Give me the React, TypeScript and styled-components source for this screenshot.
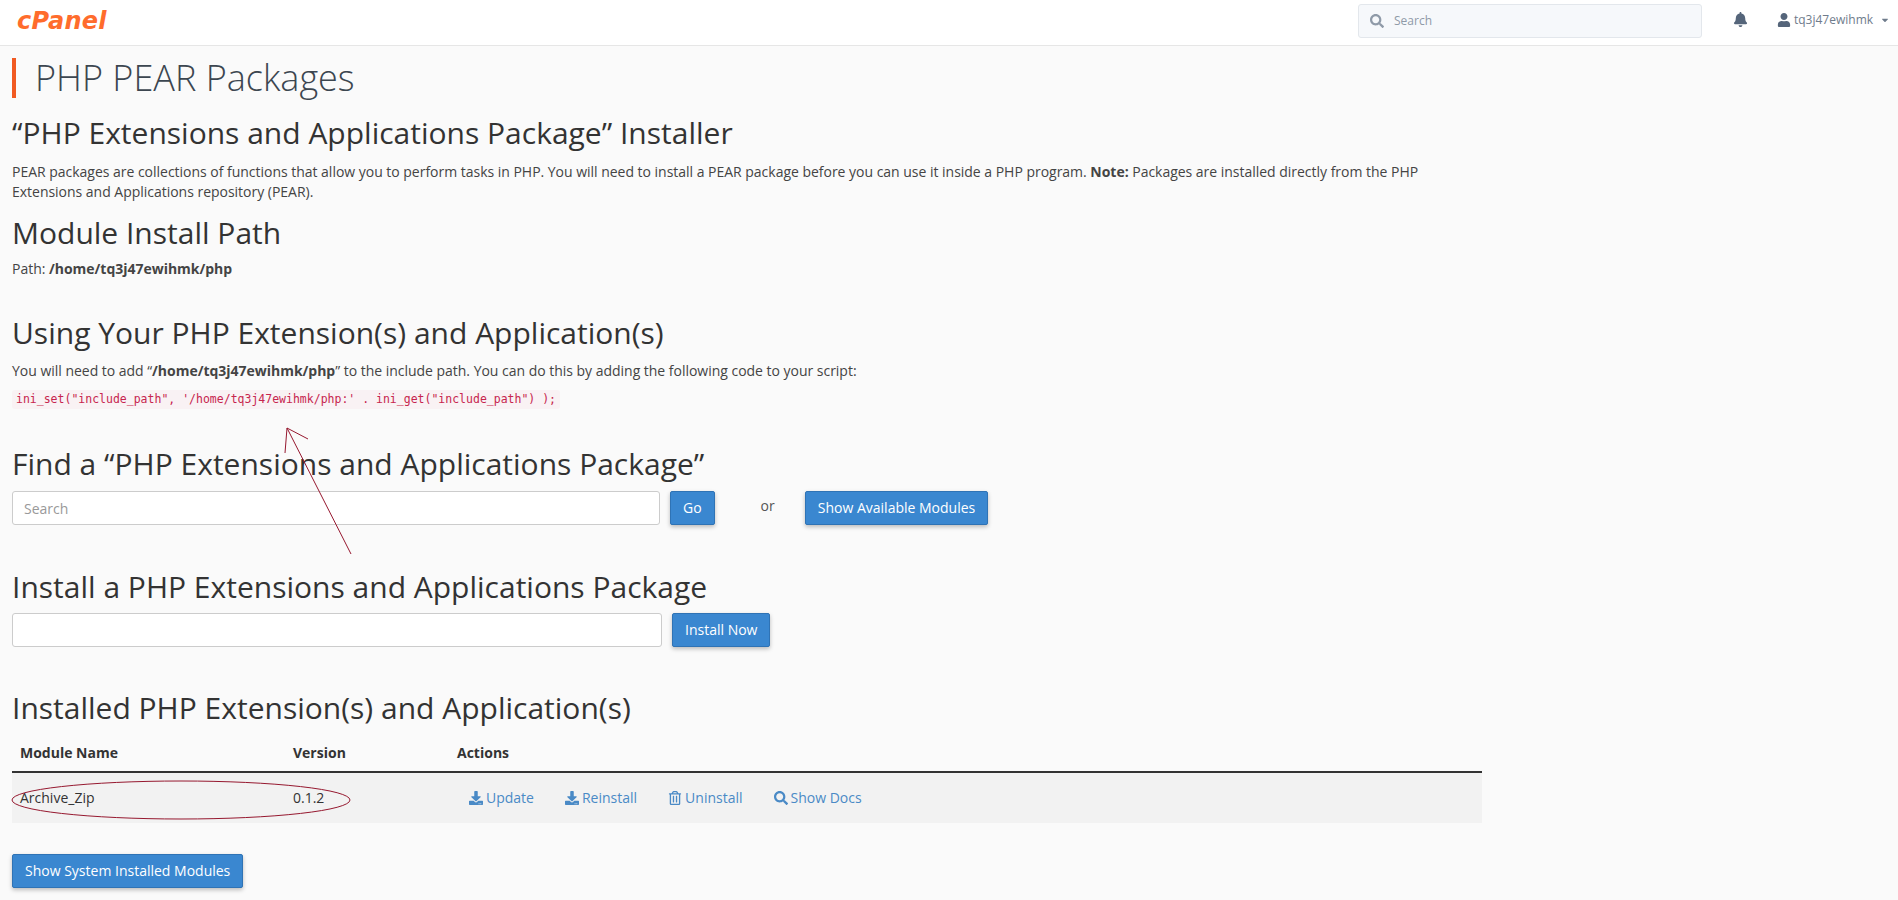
import React from "react";
import styled, { createGlobalStyle } from "styled-components";
import { FaSearch, FaBell, FaUser, FaCaretDown, FaDownload, FaRegTrashAlt } from "react-icons/fa";

const GlobalStyle = createGlobalStyle`
  html, body {
    margin: 0;
    padding: 0;
    background: #fafafa;
    color: #333;
    font-family: "Open Sans", "Liberation Sans", sans-serif;
    font-size: 14px;
    line-height: 20px;
  }
  * { box-sizing: border-box; }
`;

const blue = "#3a87d0";

const Page = styled.div`
  position: relative;
  width: 1898px;
  height: 900px;
  overflow: hidden;
`;

const TopBar = styled.header`
  display: flex;
  align-items: center;
  height: 46px;
  padding: 0 0 0 17px;
  background: #fff;
  border-bottom: 1px solid #e6e6e6;
`;

const Logo = styled.div`
  font-family: "DejaVu Sans", sans-serif;
  font-weight: 700;
  font-style: italic;
  font-size: 24px;
  letter-spacing: 0.3px;
  line-height: 24px;
  margin-top: -4px;
  color: #ff6c2c;
`;

const TopSearch = styled.div`
  display: flex;
  align-items: center;
  gap: 10px;
  width: 344px;
  height: 34px;
  margin-left: auto;
  margin-top: -4px;
  margin-right: 31px;
  padding-left: 11px;
  background: #f6f8fb;
  border: 1px solid #e3e7ec;
  border-radius: 3px;
  color: #8f9aa8;
  font-size: 12px;
`;

const TopActions = styled.div`
  display: flex;
  align-items: center;
  width: 165px;
  margin-top: -6px;
  color: #6f7c8c;
  font-size: 12px;
`;

const Bell = styled.span`
  display: flex;
  font-size: 15px;
  margin-right: 29px;
  color: #55657a;
`;

const UserName = styled.span`
  display: flex;
  align-items: center;
  gap: 3px;
  white-space: nowrap;
`;

const UserIcon = styled.span`
  display: flex;
  color: #55657a;
`;

const Caret = styled.span`
  display: flex;
  margin-left: 4px;
`;

const Content = styled.main`
  width: 1482px;
  padding-left: 12px;
`;

const PageTitle = styled.h1`
  margin: 12px 0 0;
  height: 40px;
  padding-left: 19px;
  border-left: 4px solid #f15a22;
  font-size: 36px;
  font-weight: 300;
  line-height: 40px;
  color: #3c4650;
`;

const SectionTitle = styled.h2<{ $top: number }>`
  margin: ${(p) => p.$top}px 0 0;
  font-size: 30px;
  font-weight: 400;
  line-height: 33px;
  color: #333;
`;

const Para = styled.p<{ $top?: number }>`
  margin: ${(p) => p.$top ?? 8}px 0 0;
  color: #444;
  letter-spacing: -0.02px;
`;

const Code = styled.code`
  display: inline-block;
  margin-top: 9px;
  padding: 2px 4px;
  background: #f9f2f4;
  border-radius: 3px;
  color: #c7254e;
  font-family: "DejaVu Sans Mono", "Liberation Mono", monospace;
  font-size: 11.5px;
  line-height: 15px;
`;

const FormRow = styled.div<{ $top: number }>`
  display: flex;
  align-items: center;
  gap: 10px;
  margin-top: ${(p) => p.$top}px;
`;

const TextInput = styled.input<{ $width: number }>`
  width: ${(p) => p.$width}px;
  height: 34px;
  padding: 0 11px;
  background: #fff;
  border: 1px solid #ccc;
  border-radius: 3px;
  font: inherit;
  &::placeholder { color: #999; }
`;

const Button = styled.button`
  height: 34px;
  padding: 0 12px;
  background: ${blue};
  border: 1px solid #2f73b5;
  border-radius: 2px;
  box-shadow: 0 2px 4px rgba(0, 0, 0, 0.25);
  color: #fff;
  font: inherit;
`;

const Or = styled.span`
  margin: -4px 20px 0 36px;
  color: #555;
`;

const Table = styled.div`
  width: 1470px;
  margin-top: 11px;
`;

const TableRow = styled.div<{ $head?: boolean }>`
  display: grid;
  grid-template-columns: 273px 164px 1fr;
  align-items: center;
  height: ${(p) => (p.$head ? 38 : 50)}px;
  padding-left: 8px;
  font-weight: ${(p) => (p.$head ? 700 : 400)};
  background: ${(p) => (p.$head ? "transparent" : "#f2f2f2")};
  border-bottom: ${(p) => (p.$head ? "2px solid #333" : "none")};
`;

const Actions = styled.div`
  display: flex;
  gap: 31px;
  padding-left: 12px;
`;

const ActionLink = styled.a`
  display: flex;
  align-items: center;
  gap: 3px;
  color: #4a8ac6;
`;

const FooterButton = styled(Button)`
  margin-top: 31px;
`;

const Annotations = styled.svg`
  position: absolute;
  inset: 0;
  pointer-events: none;
`;

const App = () => (
  <>
    <GlobalStyle />
    <Page>
      <TopBar>
        <Logo>cPanel</Logo>
        <TopSearch>
          <FaSearch size={14} />
          Search
        </TopSearch>
        <TopActions>
          <Bell><FaBell /></Bell>
          <UserName>
            <UserIcon><FaUser size={14} /></UserIcon>
            tq3j47ewihmk
            <Caret><FaCaretDown size={10} /></Caret>
          </UserName>
        </TopActions>
      </TopBar>
      <Content>
        <PageTitle>PHP PEAR Packages</PageTitle>
        <SectionTitle $top={18}>“PHP Extensions and Applications Package” Installer</SectionTitle>
        <Para $top={13}>
          PEAR packages are collections of functions that allow you to perform tasks in PHP. You will need to install a PEAR package before you can use it inside a PHP program. <b>Note:</b> Packages are installed directly from the PHP Extensions and Applications repository (PEAR).
        </Para>
        <SectionTitle $top={14}>Module Install Path</SectionTitle>
        <Para $top={10}>Path: <b>/home/tq3j47ewihmk/php</b></Para>
        <SectionTitle $top={37}>Using Your PHP Extension(s) and Application(s)</SectionTitle>
        <Para $top={12}>You will need to add “<b>/home/tq3j47ewihmk/php</b>” to the include path. You can do this by adding the following code to your script:</Para>
        <Code>ini_set("include_path", '/home/tq3j47ewihmk/php:' . ini_get("include_path") );</Code>
        <SectionTitle $top={38}>Find a “PHP Extensions and Applications Package”</SectionTitle>
        <FormRow $top={11}>
          <TextInput $width={648} placeholder="Search" />
          <Button>Go</Button>
          <Or>or</Or>
          <Button>Show Available Modules</Button>
        </FormRow>
        <SectionTitle $top={45}>Install a PHP Extensions and Applications Package</SectionTitle>
        <FormRow $top={10}>
          <TextInput $width={650} />
          <Button>Install Now</Button>
        </FormRow>
        <SectionTitle $top={44}>Installed PHP Extension(s) and Application(s)</SectionTitle>
        <Table>
          <TableRow $head>
            <span>Module Name</span>
            <span>Version</span>
            <span>Actions</span>
          </TableRow>
          <TableRow>
            <span>Archive_Zip</span>
            <span>0.1.2</span>
            <Actions>
              <ActionLink><FaDownload size={14} /> Update</ActionLink>
              <ActionLink><FaDownload size={14} /> Reinstall</ActionLink>
              <ActionLink><FaRegTrashAlt size={14} /> Uninstall</ActionLink>
              <ActionLink><FaSearch size={14} /> Show Docs</ActionLink>
            </Actions>
          </TableRow>
        </Table>
        <FooterButton>Show System Installed Modules</FooterButton>
      </Content>
      <Annotations width="1898" height="900">
        <g fill="none" stroke="#96182f" strokeWidth="1">
          <path d="M351 554 L287 428" />
          <path d="M287 428 L308 439 M287 428 L285 453" />
          <ellipse cx="181" cy="800" rx="169" ry="19" />
        </g>
      </Annotations>
    </Page>
  </>
);

export default App;
